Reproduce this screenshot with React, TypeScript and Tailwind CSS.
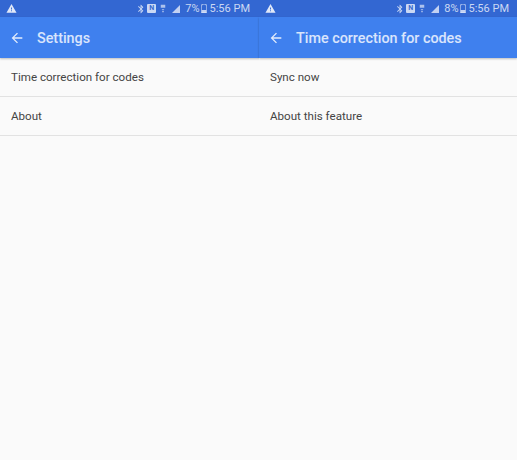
const ArrowBack = () => (
  <svg viewBox="0 0 24 24" className="h-[16px] w-[16px] fill-white/85">
    <path d="M20 11H7.83l5.59-5.59L12 4l-8 8 8 8 1.41-1.41L7.83 13H20v-2z" />
  </svg>
);

const Warning = () => (
  <svg viewBox="0 0 24 24" className="h-[11px] w-[11px] fill-white/85">
    <path d="M1 21h22L12 2 1 21zm12-3h-2v-2h2v2zm0-4h-2v-4h2v4z" />
  </svg>
);

function StatusIcons() {
  return (
    <>
      {/* bluetooth */}
      <svg viewBox="0 0 24 24" className="h-[10px] w-[10px] fill-white/75">
        <path d="M17.71 7.71L12 2h-1v7.59L6.41 5 5 6.41 10.59 12 5 17.59 6.41 19 11 14.41V22h1l5.71-5.71-4.3-4.29 4.3-4.29zM13 5.83l1.88 1.88L13 9.59V5.83zm1.88 10.46L13 18.17v-3.76l1.88 1.88z" />
      </svg>
      {/* NFC */}
      <span className="ml-[1px] flex h-[9px] w-[9px] items-center justify-center rounded-[1px] bg-white/75 text-[7px] leading-none font-bold text-[#3a6bd0]">
        N
      </span>
      {/* sim */}
      <svg viewBox="0 0 8 10" className="ml-[4px] h-[9px] w-[6px] fill-white/60">
        <path d="M1 0h6v4H1zM2.5 5.5h3v1.2h-3zM3 8h2v2H3z" />
      </svg>
      {/* signal */}
      <svg viewBox="0 0 10 10" className="ml-[6px] h-[8px] w-[8px] fill-white/70">
        <path d="M10 0v10H0z" />
      </svg>
    </>
  );
}

function Battery() {
  return (
    <svg viewBox="0 0 8 12" className="ml-[1px] h-[9px] w-[6px]">
      <path d="M2.5 0h3v1H7.5v11H.5V1h2z" fill="none" stroke="#fff" strokeOpacity=".7" />
      <path d="M1 8h6v4H1z" fill="#fff" fillOpacity=".7" />
    </svg>
  );
}

function Screen({
  title,
  percent,
  rows,
  className,
  statusClass,
}: {
  title: string;
  percent: string;
  rows: string[];
  className: string;
  statusClass: string;
}) {
  return (
    <div className={`flex h-full flex-col bg-[#fafafa] ${className}`}>
      <div className={`flex h-[17px] items-center bg-[#3367d2] pl-[6px] ${statusClass}`}>
        <Warning />
        <div className="ml-auto flex items-center">
          <StatusIcons />
          <span className="ml-[5px] text-[11px] leading-none text-white/75">{percent}</span>
          <Battery />
          <span className="ml-[3px] text-[11px] leading-none text-white/75">5:56 PM</span>
        </div>
      </div>
      <div className="flex h-[41px] items-center bg-[#3f80ee] pl-[9px] shadow-[0_1px_2px_rgba(0,0,0,0.25)]">
        <ArrowBack />
        <span className="ml-[12px] pt-[2px] text-[14.35px] font-medium text-white/80">{title}</span>
      </div>
      <div>
        {rows.map((row) => (
          <div
            key={row}
            className="flex h-[39px] items-center border-b border-[#e2e2e2] pt-[1px] pl-[11px] text-[11.6px] text-[#444444]"
          >
            {row}
          </div>
        ))}
      </div>
    </div>
  );
}

export default function App() {
  return (
    <div className="flex h-[460px] w-[517px] font-['Roboto',sans-serif]">
      <Screen
        className="w-[259px]"
        statusClass="pr-[9px]"
        title="Settings"
        percent="7%"
        rows={["Time correction for codes", "About"]}
      />
      <Screen
        className="w-[258px]"
        statusClass="pr-[8px]"
        title="Time correction for codes"
        percent="8%"
        rows={["Sync now", "About this feature"]}
      />
    </div>
  );
}
